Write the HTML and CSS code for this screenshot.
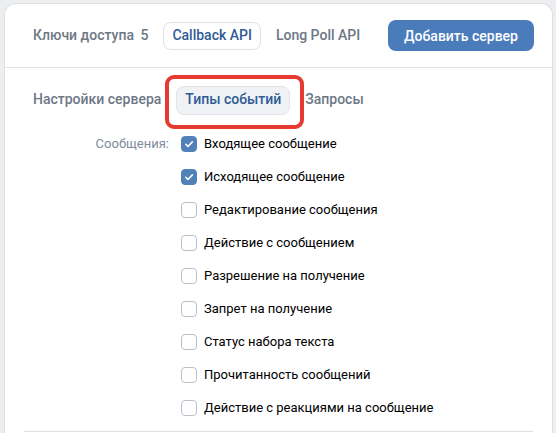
FILE: index.html
```html
<!DOCTYPE html>
<html lang="ru">
<head>
<meta charset="UTF-8">
<meta name="viewport" content="width=device-width, initial-scale=1.0">
<title>Callback API</title>
<link rel="stylesheet" href="styles.css">
</head>
<body>
<div class="card">
    <div class="header">
        <div class="tabs">
            <div class="tab">Ключи доступа <span class="count">5</span></div>
            <div class="tab tab-active">Callback API</div>
            <div class="tab">Long Poll API</div>
        </div>
        <button class="add-btn">Добавить сервер</button>
    </div>
    <div class="subtabs">
        <div class="tab">Настройки сервера</div>
        <div class="tab tab-sub-active">Типы событий<span class="highlight"></span></div>
        <div class="tab">Запросы</div>
    </div>
    <div class="events">
        <div class="group-label">Сообщения:</div>
        <div class="options">
            <label class="option"><span class="box checked"><svg viewBox="0 0 16 16" width="16" height="16"><path d="M4.3 8.3l2.5 2.5 5-5.2" fill="none" stroke="#fff" stroke-width="1.8" stroke-linecap="round" stroke-linejoin="round"/></svg></span>Входящее сообщение</label>
            <label class="option"><span class="box checked"><svg viewBox="0 0 16 16" width="16" height="16"><path d="M4.3 8.3l2.5 2.5 5-5.2" fill="none" stroke="#fff" stroke-width="1.8" stroke-linecap="round" stroke-linejoin="round"/></svg></span>Исходящее сообщение</label>
            <label class="option"><span class="box"></span>Редактирование сообщения</label>
            <label class="option"><span class="box"></span>Действие с сообщением</label>
            <label class="option"><span class="box"></span>Разрешение на получение</label>
            <label class="option"><span class="box"></span>Запрет на получение</label>
            <label class="option"><span class="box"></span>Статус набора текста</label>
            <label class="option"><span class="box"></span>Прочитанность сообщений</label>
            <label class="option"><span class="box"></span>Действие с реакциями на сообщение</label>
        </div>
    </div>
    <div class="separator"></div>
</div>
</body>
</html>
```

FILE: styles.css
```css
body {
    margin: 0;
    padding: 3px 3px 0 4px;
    background-color: #edeef0;
    font-family: Roboto, "Liberation Sans", Arial, sans-serif;
    font-size: 13px;
    color: #000;
}
.card {
    background-color: #fff;
    border: 1px solid #dce1e6;
    border-bottom: none;
    border-radius: 12px 12px 0 0;
    height: 440px;
}
.header {
    display: flex;
    align-items: center;
    height: 63px;
    padding: 0 18px 0 19px;
    border-bottom: 1px solid #e3e4e8;
}
.tabs,
.subtabs {
    display: flex;
    align-items: center;
    gap: 6px;
}
.tab {
    position: relative;
    height: 26px;
    line-height: 24px;
    padding: 0 8px;
    border: 1px solid transparent;
    border-radius: 8px;
    font-size: 14px;
    font-weight: 500;
    color: #6d7885;
    white-space: nowrap;
}
.count {
    margin-left: 3px;
}
.tab-active {
    border-color: #dce1e6;
    color: #2f5b96;
}
.add-btn {
    margin-left: auto;
    height: 31px;
    padding: 0 16px;
    background-color: #4a7bbb;
    color: #fff;
    border: none;
    border-radius: 8px;
    font-family: inherit;
    font-size: 14px;
    font-weight: 500;
    cursor: pointer;
}
.subtabs {
    padding: 18px 19px 0;
}
.subtabs .tab {
    height: 27px;
    line-height: 25px;
}
.tab-sub-active {
    background-color: #f0f2f5;
    border-color: #e1e4e8;
    color: #2f5b96;
}
.highlight {
    position: absolute;
    left: -12px;
    top: -12px;
    right: -15px;
    bottom: -15px;
    border: 4px solid #e6392f;
    border-radius: 9px;
}
.events {
    display: flex;
    padding-top: 12px;
}
.group-label {
    width: 164px;
    text-align: right;
    color: #818c99;
    height: 33px;
    line-height: 33px;
}
.options {
    display: flex;
    flex-direction: column;
    padding-left: 12px;
}
.option {
    display: flex;
    align-items: center;
    gap: 7px;
    height: 33px;
}
.box {
    display: flex;
    align-items: center;
    justify-content: center;
    width: 16px;
    height: 16px;
    box-sizing: border-box;
    border: 1.5px solid #b8c1cc;
    border-radius: 4px;
}
.box.checked {
    background-color: #5181b8;
    border-color: #5181b8;
}
.separator {
    margin: 7px 19px 0 19px;
    border-top: 1px solid #dce1e6;
}
```
